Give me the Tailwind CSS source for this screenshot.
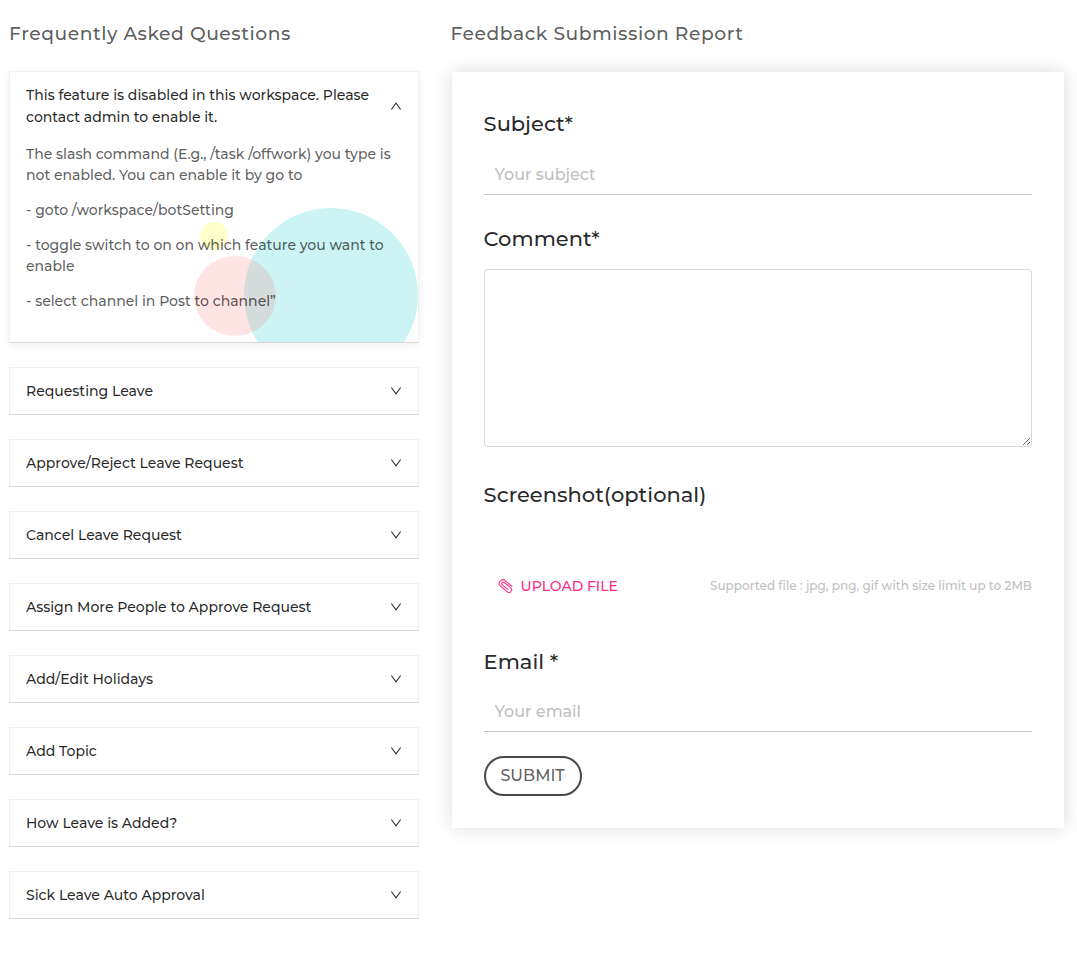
<!DOCTYPE html>
<html lang="en"><head><meta charset="utf-8"><title>Help</title>
<script src="https://cdn.jsdelivr.net/npm/@tailwindcss/browser@4"></script></head>
<body class="bg-white font-['Montserrat','Inter',sans-serif] font-medium text-[14px] text-black/85">
<svg class="hidden"><symbol id="down" viewBox="64 64 896 896"><path d="M884 256h-75c-5.100 0-9.900 2.500-12.900 6.600L512 654.200 227.900 262.600c-3-4.100-7.800-6.600-12.900-6.600h-75c-6.500 0-10.300 7.400-6.500 12.700l352.600 486.100c12.800 17.600 39 17.600 51.700 0l352.600-486.100c3.900-5.300.1-12.700-6.400-12.700z"/></symbol></svg>
<main class="flex items-start gap-8 pl-[9px] pt-5 pr-3">
  <section class="w-[410px] shrink-0">
    <h2 class="text-[18.72px] leading-[28px] tracking-[0.53px] text-black/65 mb-[23px]">Frequently Asked Questions</h2>
    <div class="flex flex-col gap-6">
      <article class="relative h-[272px] border border-[#f0f0f0] border-b-[#d9d9d9] shadow-[0_2px_8px_rgba(0,0,0,0.07)] px-4">
        <div class="absolute inset-0 overflow-hidden">
          <div class="absolute left-[190px] top-[150px] size-[28px] rounded-full bg-[#ffff00]/20"></div>
          <div class="absolute left-[234px] top-[136px] size-[174px] rounded-full bg-[#00c8c8]/20"></div>
          <div class="absolute left-[184px] top-[184px] w-[82px] h-[80px] rounded-[50%] bg-[#ff7a7a]/20"></div>
        </div>
        <div class="relative flex items-center justify-between pt-3 leading-[22px]">
          <h3 class="w-[352px]">This feature is disabled in this workspace. Please contact admin to enable it.</h3>
          <svg class="size-3 rotate-180" fill="currentColor"><use href="#down"/></svg>
        </div>
        <div class="relative pt-4 leading-[21px] text-black/65 flex flex-col gap-[14px]">
          <p>The slash command (E.g., /task /offwork) you type is not enabled. You can enable it by go to</p>
          <p>- goto /workspace/botSetting</p>
          <p>- toggle switch to on on which feature you want to enable</p>
          <p>- select channel in Post to channel”</p>
        </div>
      </article>
      <article class="h-12 border border-[#f0f0f0] border-b-[#d9d9d9] px-4 flex items-center justify-between"><h3>Requesting Leave</h3><svg class="size-3" fill="currentColor"><use href="#down"/></svg></article>
      <article class="h-12 border border-[#f0f0f0] border-b-[#d9d9d9] px-4 flex items-center justify-between"><h3>Approve/Reject Leave Request</h3><svg class="size-3" fill="currentColor"><use href="#down"/></svg></article>
      <article class="h-12 border border-[#f0f0f0] border-b-[#d9d9d9] px-4 flex items-center justify-between"><h3>Cancel Leave Request</h3><svg class="size-3" fill="currentColor"><use href="#down"/></svg></article>
      <article class="h-12 border border-[#f0f0f0] border-b-[#d9d9d9] px-4 flex items-center justify-between"><h3>Assign More People to Approve Request</h3><svg class="size-3" fill="currentColor"><use href="#down"/></svg></article>
      <article class="h-12 border border-[#f0f0f0] border-b-[#d9d9d9] px-4 flex items-center justify-between"><h3>Add/Edit Holidays</h3><svg class="size-3" fill="currentColor"><use href="#down"/></svg></article>
      <article class="h-12 border border-[#f0f0f0] border-b-[#d9d9d9] px-4 flex items-center justify-between"><h3>Add Topic</h3><svg class="size-3" fill="currentColor"><use href="#down"/></svg></article>
      <article class="h-12 border border-[#f0f0f0] border-b-[#d9d9d9] px-4 flex items-center justify-between"><h3>How Leave is Added?</h3><svg class="size-3" fill="currentColor"><use href="#down"/></svg></article>
      <article class="h-12 border border-[#f0f0f0] border-b-[#d9d9d9] px-4 flex items-center justify-between"><h3>Sick Leave Auto Approval</h3><svg class="size-3" fill="currentColor"><use href="#down"/></svg></article>
    </div>
  </section>
  <section class="flex-1">
    <h2 class="text-[18.72px] leading-[28px] tracking-[0.53px] text-black/65 mb-[23px] -ml-[0.5px]">Feedback Submission Report</h2>
    <form class="mt-[24px] ml-[0.6px] h-[756px] w-[612.4px] bg-white shadow-[0_0_18px_rgba(0,0,0,0.14)] px-8 pt-9">
      <label class="block text-[21px] leading-8">Subject*</label>
      <input class="block w-full h-[40px] mt-[15px] px-[11px] text-base font-medium border-b border-[#c4c4c4] placeholder:text-[#bfbfbf]" placeholder="Your subject">
      <label class="block text-[21px] leading-8 mt-[28px]">Comment*</label>
      <textarea class="block w-full h-[178px] mt-[14px] border border-[#d9d9d9] rounded resize-y"></textarea>
      <label class="block text-[21px] leading-8 mt-8">Screenshot(optional)</label>
      <div class="mt-[59px] h-8 flex items-center justify-between">
        <button type="button" class="flex items-center gap-[7px] pl-[14px] text-[#ff2e86]"><svg class="size-4 -mt-px" viewBox="-8 -8 16 16" fill="none" stroke="currentColor" stroke-width="1.15" stroke-linecap="round"><path transform="rotate(40) scale(.96)" d="M5 -3.700H-4.300A3.700 3.700 0 0 0 -4.300 3.700H5A2.700 2.700 0 0 0 5 -1.700H-3.700A1.600 1.600 0 0 0 -3.700 1.500H3.800"/></svg>UPLOAD FILE</button>
        <span class="text-[12px] tracking-[0.015px] text-[#bfbfbf]">Supported file : jpg, png, gif with size limit up to 2MB</span>
      </div>
      <label class="block text-[21px] leading-8 mt-[44px]">Email *</label>
      <input class="block w-full h-[40px] mt-[14px] px-[11px] text-base font-medium border-b border-[#c4c4c4] placeholder:text-[#bfbfbf]" placeholder="Your email">
      <button type="button" class="mt-6 w-[98px] h-10 rounded-[20px] border-2 border-[#484848] text-base font-medium text-black/65">SUBMIT</button>
    </form>
  </section>
</main>
</body></html>
